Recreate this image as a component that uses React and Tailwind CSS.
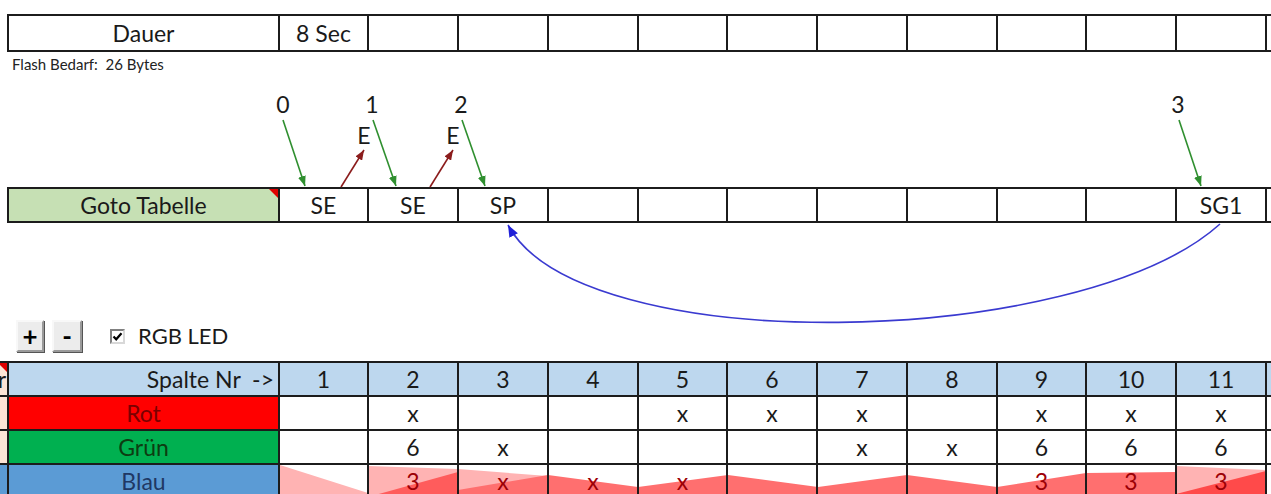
import React from 'react';

const COLS = ['w-[89px]', 'w-[90px]', 'w-[90px]', 'w-[90px]', 'w-[89px]', 'w-[90px]', 'w-[90px]', 'w-[90px]', 'w-[89px]', 'w-[90px]', 'w-[90px]'];

function Cell({ w, h, className = '', children }) {
  return (
    <div className={`relative shrink-0 border-r-2 border-b-2 border-[#1c1c1c] flex items-center justify-center overflow-hidden ${w} ${h} ${className}`}>
      {children}
    </div>
  );
}

const ROT = ['', 'x', '', '', 'x', 'x', 'x', '', 'x', 'x', 'x'];
const GRUEN = ['', '6', 'x', '', '', '', 'x', 'x', '6', '6', '6'];
const BLAU = ['', '3', 'x', 'x', 'x', '', '', '', '3', '3', '3'];
const TOP = ['8 Sec', '', '', '', '', '', '', '', '', '', ''];
const GOTO = ['SE', 'SE', 'SP', '', '', '', '', '', '', '', 'SG1'];

function RedCorner() {
  return <div className="absolute right-0 top-0 w-0 h-0 border-t-[9px] border-l-[9px] border-t-[#e00000] border-l-transparent" />;
}

export default function App() {
  return (
    <div className="relative w-[1271px] h-[494px] overflow-hidden bg-white font-['Lato',sans-serif] text-[#1a1a1a] text-[23px]">
      {/* Top table */}
      <div className="mt-[14px] ml-[7px] flex w-max border-t-2 border-l-2 border-[#1c1c1c]">
        <Cell w="w-[271px]" h="h-[36px]">Dauer</Cell>
        {TOP.map((t, i) => (
          <Cell key={i} w={COLS[i]} h="h-[36px]">{t}</Cell>
        ))}
        <Cell w="w-[120px]" h="h-[36px]" />
      </div>

      <div className="ml-[12px] mt-[4px] h-[16px] text-[15px] leading-[16px] text-[#222]">Flash Bedarf:&nbsp; 26 Bytes</div>

      {/* Arrow labels area */}
      <div className="relative h-[115px] leading-[24px] text-[23px]">
        <span className="absolute left-[273px] top-[20px] w-[20px] text-center">0</span>
        <span className="absolute left-[362px] top-[20px] w-[20px] text-center">1</span>
        <span className="absolute left-[451px] top-[20px] w-[20px] text-center">2</span>
        <span className="absolute left-[1168px] top-[20px] w-[20px] text-center">3</span>
        <span className="absolute left-[354px] top-[51px] w-[20px] text-center">E</span>
        <span className="absolute left-[443px] top-[51px] w-[20px] text-center">E</span>
      </div>

      {/* Goto row */}
      <div className="ml-[7px] flex w-max border-t-2 border-l-2 border-[#1c1c1c]">
        <Cell w="w-[271px]" h="h-[34px]" className="bg-[#c6e0b4]">
          Goto Tabelle
          <RedCorner />
        </Cell>
        {GOTO.map((t, i) => (
          <Cell key={i} w={COLS[i]} h="h-[34px]">{t}</Cell>
        ))}
        <Cell w="w-[120px]" h="h-[34px]" />
      </div>

      {/* Controls */}
      <div className="mt-[97px] h-[32px] flex items-center pl-[16px]">
        <button className="w-[28px] h-[32px] flex items-center justify-center bg-[#ececec] border-2 border-t-[#f8f8f8] border-l-[#f8f8f8] border-r-[#9a9a9a] border-b-[#9a9a9a] shadow-[1px_1px_0_#555] text-[26px] font-bold leading-none text-black">+</button>
        <button className="ml-[8px] w-[30px] h-[32px] flex items-center justify-center bg-[#ececec] border-2 border-t-[#f8f8f8] border-l-[#f8f8f8] border-r-[#9a9a9a] border-b-[#9a9a9a] shadow-[1px_1px_0_#555] text-[26px] font-bold leading-none text-black">-</button>
        <div className="ml-[28px] flex items-center self-start mt-[6px]">
          <div className="w-[15px] h-[15px] border-2 border-t-[#808080] border-l-[#808080] border-r-[#d8d8d8] border-b-[#d8d8d8] bg-white flex items-center justify-center">
            <svg width="11" height="11" viewBox="0 0 11 11">
              <path d="M1.5 5.5 L4.2 8.3 L9.5 2.2" fill="none" stroke="#000" strokeWidth="2.2" />
            </svg>
          </div>
          <span className="ml-[13px] text-[22px] leading-[20px]">RGB LED</span>
        </div>
      </div>

      {/* Bottom table */}
      <div className="mt-[9px] w-max border-t-2 border-[#1c1c1c]">
        <div className="flex">
          <Cell w="w-[9px]" h="h-[34px]" className="bg-[#fce4d6] !justify-end">
            <span className="pr-[1px]">r</span>
            <RedCorner />
          </Cell>
          <Cell w="w-[271px]" h="h-[34px]" className="bg-[#bdd7ee] !justify-end pr-[4px]">Spalte Nr&nbsp; -&gt;</Cell>
          {COLS.map((w, i) => (
            <Cell key={i} w={w} h="h-[34px]" className="bg-[#bdd7ee]">{i + 1}</Cell>
          ))}
          <Cell w="w-[120px]" h="h-[34px]" className="bg-[#bdd7ee]" />
        </div>
        <div className="flex">
          <Cell w="w-[9px]" h="h-[34px]" className="bg-[#fce4d6]" />
          <Cell w="w-[271px]" h="h-[34px]" className="bg-[#ff0000] text-[#7a0000]">Rot</Cell>
          {ROT.map((t, i) => (
            <Cell key={i} w={COLS[i]} h="h-[34px]">{t}</Cell>
          ))}
          <Cell w="w-[120px]" h="h-[34px]" />
        </div>
        <div className="flex">
          <Cell w="w-[9px]" h="h-[34px]" className="bg-[#fce4d6]" />
          <Cell w="w-[271px]" h="h-[34px]" className="bg-[#00b050] text-[#0d3d12]">Grün</Cell>
          {GRUEN.map((t, i) => (
            <Cell key={i} w={COLS[i]} h="h-[34px]">{t}</Cell>
          ))}
          <Cell w="w-[120px]" h="h-[34px]" />
        </div>
        <div className="relative flex bg-white">
          <svg className="absolute left-0 top-0" width="1271" height="40" viewBox="0 465 1271 40">
            <polygon points="280,465 368,493 368,505 280,505" fill="#ffb3b3" />
            <polygon points="368,466 458,469 548,476 548,505 368,505" fill="#ffb3b3" />
            <polygon points="1176,466 1266,470 1266,505 1176,505" fill="#ffb3b3" />
            <polygon points="368,497 458,472 458,505 368,505" fill="#ff5c5c" />
            <polygon points="458,490 548,475 638,487 728,475 818,487 907,475 997,487 1086,473 1176,472 1176,505 458,505" fill="#ff6f6f" />
            <polygon points="1176,494 1266,471 1266,505 1176,505" fill="#ff4a4a" />
          </svg>
          <Cell w="w-[9px]" h="h-[34px]" className="bg-[#5b9bd5]" />
          <Cell w="w-[271px]" h="h-[34px]" className="bg-[#5b9bd5] text-[#1f3864]">Blau</Cell>
          {BLAU.map((t, i) => (
            <Cell key={i} w={COLS[i]} h="h-[34px]" className="text-[#9c0006]">{t}</Cell>
          ))}
          <Cell w="w-[120px]" h="h-[34px]" />
        </div>
      </div>

      {/* Diagram arrows overlay */}
      <svg className="absolute left-0 top-0 pointer-events-none" width="1271" height="494" viewBox="0 0 1271 494">
        <defs>
          <marker id="mg" viewBox="0 0 10 8" refX="10" refY="4" markerWidth="10" markerHeight="8" markerUnits="userSpaceOnUse" orient="auto">
            <path d="M0,0 L10,4 L0,8 z" fill="#2f8f2f" />
          </marker>
          <marker id="mr" viewBox="0 0 10 8" refX="10" refY="4" markerWidth="10" markerHeight="8" markerUnits="userSpaceOnUse" orient="auto">
            <path d="M0,0 L10,4 L0,8 z" fill="#8b1c1c" />
          </marker>
          <marker id="mb" viewBox="0 0 10 8" refX="10" refY="4" markerWidth="12" markerHeight="10" markerUnits="userSpaceOnUse" orient="auto">
            <path d="M0,0 L10,4 L0,8 z" fill="#2020d8" />
          </marker>
        </defs>
        <line x1="283" y1="120" x2="305" y2="186" stroke="#2f8f2f" strokeWidth="1.6" markerEnd="url(#mg)" />
        <line x1="373" y1="120" x2="396" y2="186" stroke="#2f8f2f" strokeWidth="1.6" markerEnd="url(#mg)" />
        <line x1="462" y1="120" x2="485" y2="186" stroke="#2f8f2f" strokeWidth="1.6" markerEnd="url(#mg)" />
        <line x1="1179" y1="120" x2="1201" y2="186" stroke="#2f8f2f" strokeWidth="1.6" markerEnd="url(#mg)" />
        <line x1="341" y1="187" x2="364" y2="150" stroke="#8b1c1c" strokeWidth="1.6" markerEnd="url(#mr)" />
        <line x1="430" y1="187" x2="453" y2="150" stroke="#8b1c1c" strokeWidth="1.6" markerEnd="url(#mr)" />
        <path d="M1220 224 C 1080 350, 580 360, 508 225" fill="none" stroke="#3a3ad0" strokeWidth="1.6" markerEnd="url(#mb)" />
      </svg>
    </div>
  );
}
